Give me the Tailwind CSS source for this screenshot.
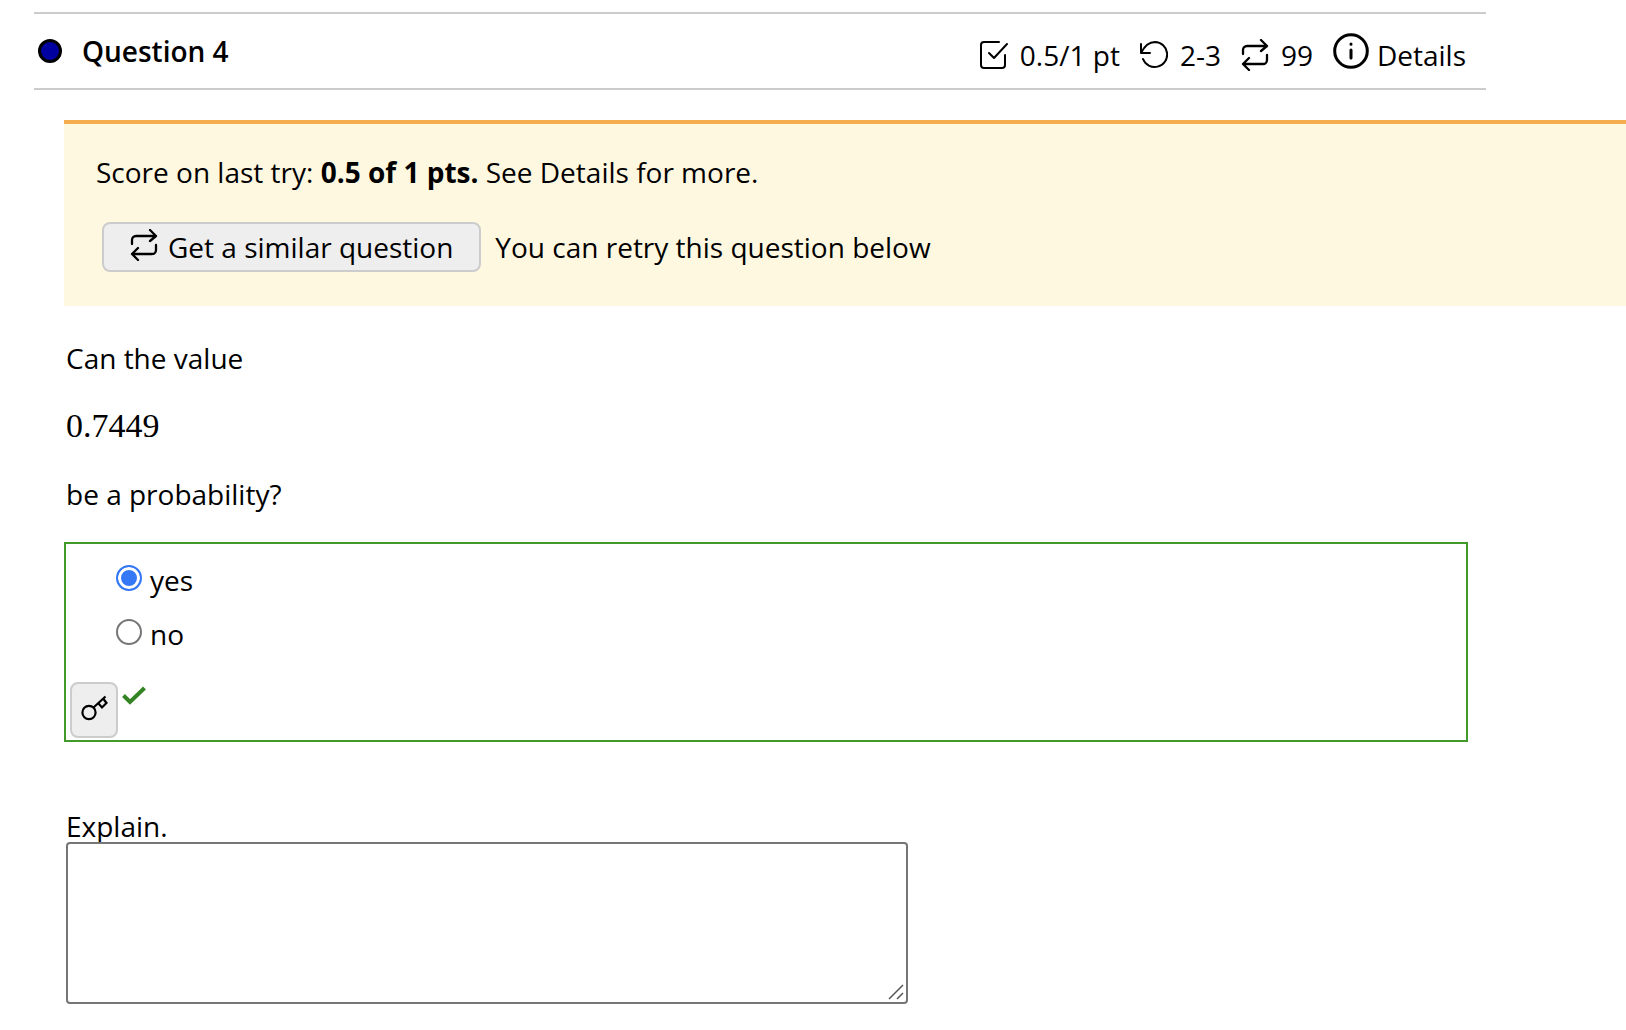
<!DOCTYPE html>
<html lang="en">
<head>
  <meta charset="UTF-8" />
  <meta name="viewport" content="width=device-width, initial-scale=1.0" />
  <title>Question 4</title>
  <script src="https://cdn.jsdelivr.net/npm/@tailwindcss/browser@4"></script>
</head>
<body class="bg-white text-black font-['Trebuchet_MS','Open_Sans',sans-serif] text-[28px] leading-10">

  <main class="pt-3 pl-[34px] pb-6">

    <!-- Question header -->
    <header class="mr-[140px] flex items-center justify-between border-y-2 border-[#ccc] h-[78px] pl-1 pr-5">
      <div class="flex items-center gap-5">
        <span class="w-6 h-6 rounded-full bg-[#0000a0] border-[3px] border-black"></span>
        <h1 class="font-semibold">Question 4</h1>
      </div>
      <div class="flex items-center pt-2">
        <svg class="w-7 h-7 mr-3" viewBox="0 0 28 28" fill="none" stroke="currentColor" stroke-width="2" stroke-linecap="round" stroke-linejoin="round">
          <path d="M19 1H4a3 3 0 0 0-3 3v20a3 3 0 0 0 3 3h18a3 3 0 0 0 3-3V14M9 12l5 5L27 3" />
        </svg>
        <span class="mr-5">0.5/1 pt</span>
        <svg class="w-7 h-7 mr-3" viewBox="0 0 28 28" fill="none" stroke="currentColor" stroke-width="2" stroke-linecap="round" stroke-linejoin="round">
          <path d="M1 3v9h9M1 12C5 4 9 1 15 1a12.500 12.500 0 1 1-12 17" />
        </svg>
        <span class="mr-5">2-3</span>
        <svg class="w-7 h-8 mr-3" viewBox="0 0 28 32" fill="none" stroke="currentColor" stroke-width="2.300" stroke-linecap="round" stroke-linejoin="round">
          <path d="M2 15v-4a4 4 0 0 1 4-4h20M20 1l6 6-6 5M26 16v5a4 4 0 0 1-4 4H2M8 19l-6 6 6 6" />
        </svg>
        <span class="mr-5">99</span>
        <a href="#" class="flex items-center gap-2">
          <svg class="w-9 h-9 mb-2" viewBox="0 0 36 36" fill="none" stroke="currentColor" stroke-width="3" stroke-linecap="round">
            <circle cx="18" cy="18" r="16.300" />
            <path d="M18 17v8M18 11v.2" />
          </svg>
          Details
        </a>
      </div>
    </header>

    <!-- Score banner -->
    <section class="mt-[30px] ml-[30px] border-t-4 border-[#f5ae4e] bg-[#fff8e0] px-8 pt-7 pb-[34px]">
      <p>Score on last try: <b class="font-bold">0.5 of 1 pts.</b> See Details for more.</p>
      <div class="mt-[30px] ml-[6px] flex items-center gap-[14px]">
        <button type="button" class="flex items-center gap-[10px] h-[50px] px-[26px] rounded-lg border-2 border-[#ccc] bg-[#eee]">
          <svg class="w-7 h-8 mb-1" viewBox="0 0 28 32" fill="none" stroke="currentColor" stroke-width="2.300" stroke-linecap="round" stroke-linejoin="round">
            <path d="M2 15v-4a4 4 0 0 1 4-4h20M20 1l6 6-6 5M26 16v5a4 4 0 0 1-4 4H2M8 19l-6 6 6 6" />
          </svg>
          Get a similar question
        </button>
        <span>You can retry this question below</span>
      </div>
    </section>

    <!-- Question body -->
    <section class="mt-8 ml-[30px] mr-[158px]">
      <div class="pl-[2px] space-y-7">
        <p>Can the value</p>
        <p class="font-['Liberation_Serif',serif] text-[34px]">0.7449</p>
        <p>be a probability?</p>
      </div>

      <div class="mt-7 border-2 border-[#429a2b] pt-4 pb-[2px] px-1">
        <div class="pl-[46px] space-y-[14px]">
          <div class="flex items-start gap-2">
            <input id="yes" name="answer" type="radio" checked class="mt-[5px] w-[26px] h-[26px] appearance-none rounded-full border-2 border-[#767676] checked:border-[#3478f6] checked:bg-[#3478f6] checked:shadow-[inset_0_0_0_3px_white]" />
            <label for="yes">yes</label>
          </div>
          <div class="flex items-start gap-2">
            <input id="no" name="answer" type="radio" class="mt-[5px] w-[26px] h-[26px] appearance-none rounded-full border-2 border-[#767676] checked:border-[#3478f6] checked:bg-[#3478f6] checked:shadow-[inset_0_0_0_3px_white]" />
            <label for="no">no</label>
          </div>
        </div>
        <div class="mt-7 flex items-start gap-1">
          <button type="button" aria-label="Show answer" class="flex items-center justify-center w-12 h-14 rounded-lg border-2 border-[#ccc] bg-[#eee] pb-1">
            <svg class="w-7 h-7" viewBox="0 0 28 28" fill="none" stroke="currentColor" stroke-width="2.200">
              <circle cx="9" cy="18.500" r="6.600" />
              <path d="M13.500 13.500L25.500 2.500M18.500 9.500l3.500 4 4.500-4.500-3-4" />
            </svg>
          </button>
          <svg class="w-6 h-5 mt-1" viewBox="0 0 24 20" fill="none" stroke="#348324" stroke-width="4">
            <path d="M1.500 9.500L8 16 22.500 2" />
          </svg>
        </div>
      </div>

      <div class="mt-[64px] pl-[2px]">
        <label for="explain" class="block h-9">Explain.</label>
        <div class="relative w-[842px] max-w-full">
          <textarea id="explain" class="block w-full h-[162px] resize-none rounded-sm border-2 border-[#767676] bg-white p-1"></textarea>
          <svg class="absolute right-1 bottom-1 w-4 h-4" viewBox="0 0 16 16" fill="none" stroke="#555" stroke-width="1.500">
            <path d="M1 15L15 1M9 15l6-6" />
          </svg>
        </div>
      </div>
    </section>

  </main>

</body>
</html>
